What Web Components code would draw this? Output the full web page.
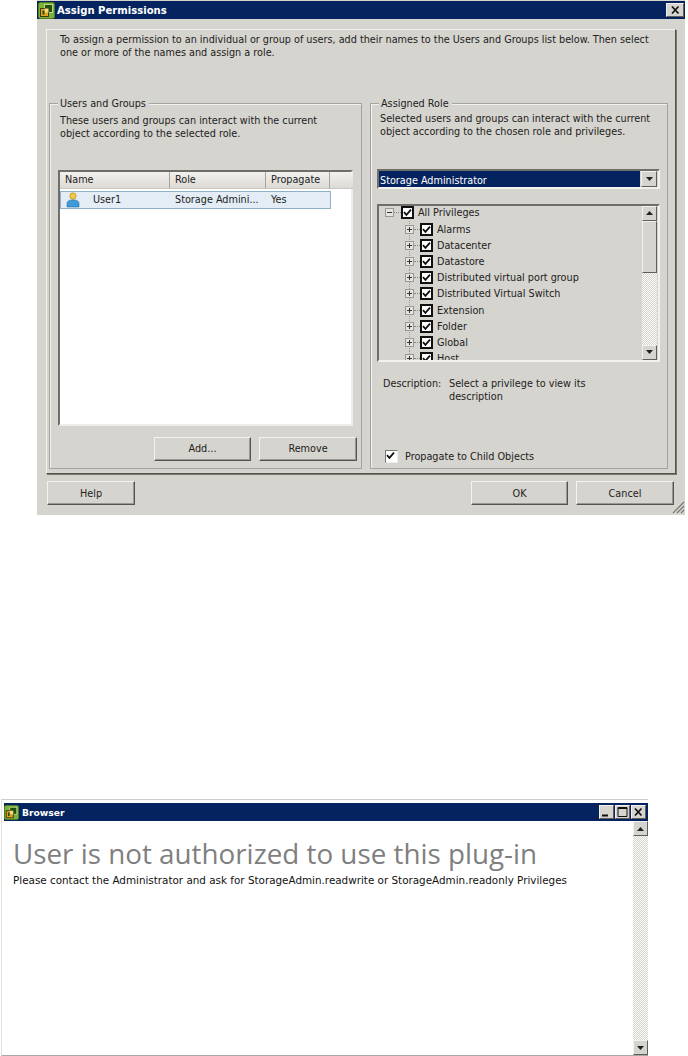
<!DOCTYPE html>
<html>
<head>
<meta charset="utf-8">
<title>Assign Permissions</title>
<style>
html, body { margin: 0; background: #fff; }
body { width: 688px; height: 1056px; overflow: hidden; font-family: "DejaVu Sans Condensed", "DejaVu Sans", sans-serif; font-stretch: condensed; font-size: 10.75px; color: #222; }
</style>
</head>
<body>
<assign-dialog></assign-dialog>
<browser-window></browser-window>

<script>
const LOGO = `<svg width="17" height="17" viewBox="0 0 17 17" style="display:block">
  <rect x="0.5" y="0.5" width="16" height="16" rx="2" fill="#7fb23a" stroke="#4e7f1e"/>
  <rect x="6.5" y="2.5" width="8" height="8" fill="#24500f" stroke="#b9d98a"/>
  <rect x="2.5" y="6.5" width="8" height="8" fill="#e5a11f" stroke="#3b3a10"/>
  <rect x="6.5" y="6.5" width="4" height="4" fill="#f6dc76"/>
  <rect x="4.5" y="8.5" width="2" height="4" fill="#24500f"/>
</svg>`;

// beveled button
class WinButton extends HTMLElement {
  constructor() {
    super();
    this.attachShadow({ mode: "open" }).innerHTML = `
<style>
:host { display: flex; align-items: center; justify-content: center; box-sizing: border-box; background: #d6d4ce;
  border: 1px solid; border-color: #f4f3ef #55544f #55544f #f4f3ef; box-shadow: inset -1px -1px 0 #9a9892; color: #222; }
</style><slot></slot>`;
  }
}
customElements.define("win-button", WinButton);

// small caption button, glyph comes from the kind attribute
class CaptionButton extends HTMLElement {
  constructor() {
    super();
    const glyphs = {
      close: `<path d="M3 2.5l6.5 7M9.5 2.5l-6.5 7" stroke="#111" stroke-width="1.7" fill="none"/>`,
      min: `<rect x="2" y="8.5" width="6" height="2" fill="#111"/>`,
      max: `<path d="M2 1.5h9v9h-9z M2 2.5h9" stroke="#111" fill="none"/>`,
      up: `<path d="M6.5 4l3.5 4h-7z" fill="#222"/>`,
      down: `<path d="M6.5 8l3.5-4h-7z" fill="#222"/>`
    };
    this.attachShadow({ mode: "open" }).innerHTML = `
<style>
:host { display: flex; align-items: center; justify-content: center; box-sizing: border-box; flex: none; background: #d6d4ce;
  border: 1px solid; border-color: #f2f1ed #5f5e59 #5f5e59 #f2f1ed; }
svg { display: block; }
</style><svg width="13" height="12" viewBox="0 0 13 12">${glyphs[this.getAttribute("kind")]}</svg>`;
  }
}
customElements.define("caption-button", CaptionButton);

// group box with the label sitting on the top border
class GroupBox extends HTMLElement {
  constructor() {
    super();
    this.attachShadow({ mode: "open" }).innerHTML = `
<style>
:host { display: block; box-sizing: border-box; border: 1px solid #a5a39d; box-shadow: inset 1px 1px 0 #f1f0ec; position: relative; }
.legend { position: absolute; left: 8px; top: -7px; background: #d6d4ce; padding: 0 3px 0 2px; line-height: 13px; }
</style>
<div class="legend">${this.getAttribute("label")}</div>
<slot></slot>`;
  }
}
customElements.define("group-box", GroupBox);

class CheckMark extends HTMLElement {
  constructor() {
    super();
    this.attachShadow({ mode: "open" }).innerHTML = `
<style>
:host { display: block; flex: none; width: 13px; height: 13px; box-sizing: border-box; background: #fff; border: 2px solid #111; }
:host([flat]) { border: 1px solid #777; border-color: #777 #eee #eee #777; }
svg { display: block; }
</style><svg width="9" height="9" viewBox="0 0 9 9"><path d="M1 4.2l2.4 2.6L8 1.6" stroke="#111" stroke-width="1.8" fill="none"/></svg>`;
  }
}
customElements.define("check-mark", CheckMark);

// one row of the privileges tree
class TreeRow extends HTMLElement {
  constructor() {
    super();
    const root = this.hasAttribute("root");
    this.attachShadow({ mode: "open" }).innerHTML = `
<style>
:host { display: flex; align-items: center; height: 16.2px; padding-left: ${root ? 6 : 26}px; white-space: nowrap;
  ${root ? "" : "background: linear-gradient(#999 50%, transparent 0) 30px 0 / 1px 2px repeat-y;"} }
.ex { flex: none; width: 9px; height: 9px; box-sizing: border-box; border: 1px solid #9a9892; background: #e6e4df; display: block; }
.dash { flex: none; width: ${root ? 7 : 6}px; border-top: 1px dotted #888; }
.label { margin-left: 4px; }
</style>
<svg class="ex" viewBox="0 0 7 7"><path d="M1 3.5h5${root ? "" : "M3.5 1v5"}" stroke="#333"/></svg>
<span class="dash"></span>
<check-mark></check-mark>
<span class="label"><slot></slot></span>`;
  }
}
customElements.define("tree-row", TreeRow);

// vertical scrollbar shared by the tree and the browser window
class VScroll extends HTMLElement {
  constructor() {
    super();
    const thumb = this.getAttribute("thumb");
    this.attachShadow({ mode: "open" }).innerHTML = `
<style>
:host { display: flex; flex-direction: column; flex: none; width: 15px; box-sizing: border-box;
  background: repeating-conic-gradient(#d6d4ce 0 25%, #fbfbf9 0 50%) 0 0 / 2px 2px; }
caption-button { width: 15px; height: 15px; }
.thumb { flex: none; height: ${thumb}px; box-sizing: border-box; background: #d6d4ce; border: 1px solid; border-color: #f2f1ed #5f5e59 #5f5e59 #f2f1ed; }
.gap { flex: 1; }
</style>
<caption-button kind="up"></caption-button>
${thumb ? `<div class="thumb"></div>` : ""}
<div class="gap"></div>
<caption-button kind="down"></caption-button>`;
  }
}
customElements.define("v-scroll", VScroll);

class UserTable extends HTMLElement {
  constructor() {
    super();
    this.attachShadow({ mode: "open" }).innerHTML = `
<style>
:host { display: block; box-sizing: border-box; background: #fff; border: 2px solid; border-color: #6f6e69 #eeede9 #eeede9 #6f6e69; height: 256px; margin: 29px 8px 0 8px; }
.head { display: grid; grid-template-columns: 110px 96px 64px 23px; height: 17px; }
.head div { background: linear-gradient(#f2f1ed, #dcdad5); border-right: 1px solid #a5a39d; border-bottom: 1px solid #c9c7c1; padding-left: 5px; line-height: 16px; box-sizing: border-box; }
.head div:last-child { border-right: 0; }
.row { display: grid; grid-template-columns: 32px 82px 96px 1fr; align-items: center; width: 271px; height: 18px; margin-top: 2px; box-sizing: border-box;
  background: #e4edf5; border: 1px solid #8fb0c6; }
svg { display: block; margin-left: 5px; }
</style>
<div class="head"><div>Name</div><div>Role</div><div>Propagate</div><div></div></div>
<div class="row">
  <svg width="14" height="16" viewBox="0 0 14 16">
    <circle cx="7" cy="4" r="3.2" fill="#f3c83e" stroke="#a8842a" stroke-width=".6"/>
    <path d="M1 15v-3.5c0-2.5 2.5-3.6 6-3.6s6 1.1 6 3.6V15z" fill="#3e9bd8" stroke="#2b6f9f" stroke-width=".6"/>
  </svg>
  <span>User1</span><span>Storage Admini...</span><span>Yes</span>
</div>`;
  }
}
customElements.define("user-table", UserTable);

class PrivilegeTree extends HTMLElement {
  constructor() {
    super();
    const names = ["Alarms", "Datacenter", "Datastore", "Distributed virtual port group", "Distributed Virtual Switch", "Extension", "Folder", "Global", "Host"];
    this.attachShadow({ mode: "open" }).innerHTML = `
<style>
:host { display: flex; box-sizing: border-box; height: 158px; margin: 15px 7px 0 6px; overflow: hidden; border: 2px solid; border-color: #6f6e69 #f2f1ed #f2f1ed #6f6e69; }
.rows { flex: 1; overflow: hidden; margin-top: -1px; }
v-scroll { margin-right: 1px; }
</style>
<div class="rows">
  <tree-row root>All Privileges</tree-row>
  ${names.map(n => `<tree-row>${n}</tree-row>`).join("")}
</div>
<v-scroll thumb="52"></v-scroll>`;
  }
}
customElements.define("privilege-tree", PrivilegeTree);

class AssignDialog extends HTMLElement {
  constructor() {
    super();
    this.attachShadow({ mode: "open" }).innerHTML = `
<style>
:host { display: flex; flex-direction: column; box-sizing: border-box; width: 648px; height: 515px; margin-left: 37px; padding-top: 1px; background: #d6d4ce; position: relative; }
.title { display: flex; align-items: center; height: 18px; flex: none; background: #05245f; color: #fff; font-weight: bold; font-size: 11.2px; padding: 0 1px 0 1px; }
.title .ic { margin-right: 2px; }
.title span { flex: 1; }
.title caption-button { width: 18px; height: 14px; }
.panel { box-sizing: border-box; width: 630px; height: 445px; margin: 10px 0 0 9px; border: 1px solid; border-color: #f4f3ef #55544f #55544f #f4f3ef; box-shadow: 1px 1px 0 #77766f;
  display: flex; flex-direction: column; padding: 0 7px 0 2px; }
.intro { padding: 3px 0 0 11px; line-height: 13.4px; height: 70px; box-sizing: border-box; }
.cols { display: flex; gap: 8px; margin-top: 3px; }
.left { width: 313px; height: 366px; flex: none; }
.right { width: 298px; height: 366px; flex: none; }
.gtext { line-height: 13.4px; padding: 10px 0 0 10px; }
.right .gtext { padding: 8px 0 0 9px; }
.gbtns { display: flex; gap: 8px; margin: 11px 0 0 104px; }
.gbtns win-button { width: 97px; height: 24px; }
.gbtns win-button + win-button { width: 98px; }
.combo { display: flex; box-sizing: border-box; height: 20px; margin: 30px 7px 0 6px; border: 2px solid; border-color: #6f6e69 #f2f1ed #f2f1ed #6f6e69; }
.combo span { flex: 1; background: #05245f; color: #fff; margin: 0 1px 0 0; height: 16px; line-height: 19px; padding-left: 1px; overflow: hidden; }
.combo caption-button { width: 16px; margin-right: 1px; }
.desc { display: grid; grid-template-columns: 66px 190px; margin: 15px 0 0 12px; line-height: 13px; }
.prop { display: flex; align-items: center; gap: 7px; margin: 47px 0 0 14px; }
.foot { display: flex; margin: 7px 0 0 10px; }
.foot win-button { width: 88px; height: 24px; }
.foot .ok { width: 97px; margin-left: 336px; }
.foot .cancel { width: 98px; margin-left: 8px; }
.grip { position: absolute; right: 0; bottom: 1px; }
</style>
<div class="title"><div class="ic">${LOGO}</div><span>Assign Permissions</span><caption-button kind="close"></caption-button></div>
<div class="panel">
  <div class="intro">To assign a permission to an individual or group of users, add their names to the Users and Groups list below. Then select<br>one or more of the names and assign a role.</div>
  <div class="cols">
    <group-box class="left" label="Users and Groups">
      <div class="gtext">These users and groups can interact with the current<br>object according to the selected role.</div>
      <user-table></user-table>
      <div class="gbtns"><win-button>Add...</win-button><win-button>Remove</win-button></div>
    </group-box>
    <group-box class="right" label="Assigned Role">
      <div class="gtext">Selected users and groups can interact with the current<br>object according to the chosen role and privileges.</div>
      <div class="combo"><span>Storage Administrator</span><caption-button kind="down"></caption-button></div>
      <privilege-tree></privilege-tree>
      <div class="desc"><div>Description:</div><div>Select a privilege to view its description</div></div>
      <div class="prop"><check-mark flat></check-mark><span>Propagate to Child Objects</span></div>
    </group-box>
  </div>
</div>
<div class="foot"><win-button>Help</win-button><win-button class="ok">OK</win-button><win-button class="cancel">Cancel</win-button></div>
<svg class="grip" width="14" height="14" viewBox="0 0 14 14"><path d="M13 2L2 13M13 6L6 13M13 10L10 13" stroke="#77766f" stroke-width="1.2"/></svg>`;
  }
}
customElements.define("assign-dialog", AssignDialog);

class BrowserWindow extends HTMLElement {
  constructor() {
    super();
    this.attachShadow({ mode: "open" }).innerHTML = `
<style>
:host { display: flex; flex-direction: column; box-sizing: border-box; width: 647px; height: 257px; margin: 284px 0 0 1px; padding: 3px 0 0 2px; background: #fff;
  border-top: 1px solid #cfcdc8; border-left: 1px solid #e3e1dd; border-bottom: 1px solid #a9a7a2; font-stretch: normal; font-family: "DejaVu Sans", sans-serif; }
.title { display: flex; align-items: center; flex: none; height: 18px; background: #05245f; color: #fff; font-weight: bold; font-size: 9.2px; padding: 0 2px 0 0; }
.title .ic { margin-right: 3px; }
.title .ic svg { width: 15px; height: 15px; }
.title span { flex: 1; }
.title caption-button { width: 15px; height: 14px; }
.title caption-button + caption-button { margin-left: 1px; }
.body { flex: 1; display: flex; min-height: 0; }
.page { flex: 1; padding: 15px 0 0 9px; }
h1 { margin: 0; font: 400 27.8px/34px "Open Sans", sans-serif; color: #7f7f7f; white-space: nowrap; }
p { margin: 3px 0 0; font-size: 10.38px; line-height: 14px; color: #111; white-space: nowrap; }
</style>
<div class="title"><div class="ic">${LOGO}</div><span>Browser</span>
  <caption-button kind="min"></caption-button><caption-button kind="max"></caption-button><caption-button kind="close"></caption-button></div>
<div class="body">
  <div class="page">
    <h1>User is not authorized to use this plug-in</h1>
    <p>Please contact the Administrator and ask for StorageAdmin.readwrite or StorageAdmin.readonly Privileges</p>
  </div>
  <v-scroll></v-scroll>
</div>`;
  }
}
customElements.define("browser-window", BrowserWindow);
</script>
</body>
</html>
